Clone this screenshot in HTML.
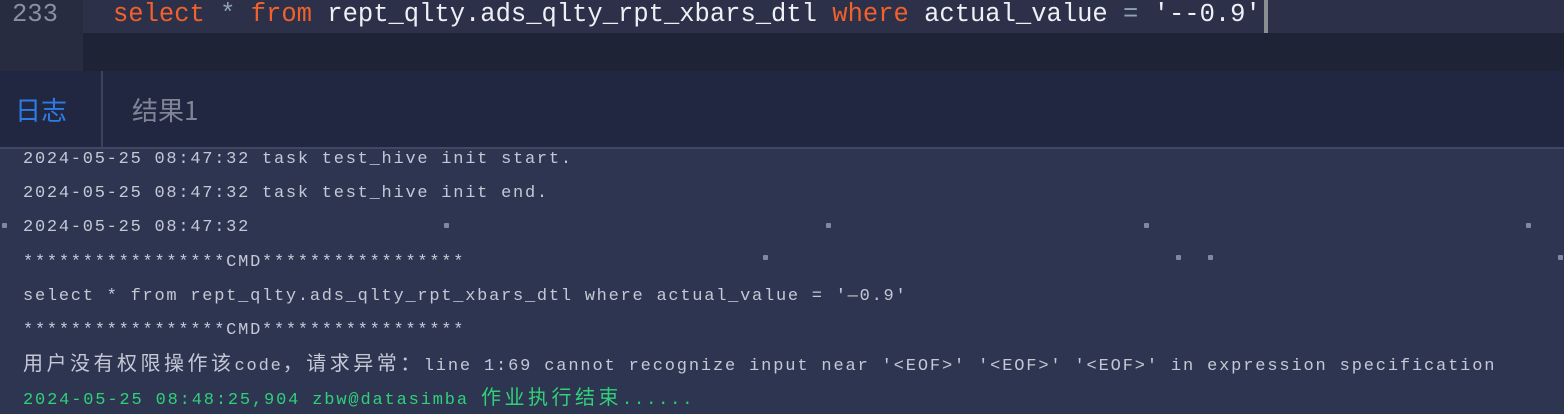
<!DOCTYPE html>
<html><head><meta charset="utf-8"><style>
html,body{margin:0;padding:0;width:1564px;height:414px;overflow:hidden;background:#2e3550;position:relative}
.abs{position:absolute}
.code{font-family:"Liberation Mono",monospace;font-size:25.5px;white-space:pre;color:#eef0f5;line-height:33px}
.kw{color:#f0612c}
.log{font-family:"Liberation Mono","Noto Sans CJK SC",monospace;font-size:17px;letter-spacing:1.75px;color:#c4c8d6;white-space:pre;left:23px;line-height:20px}
.l2{letter-spacing:1.85px}
.cj{font-family:"Noto Sans CJK SC",sans-serif;font-size:20px;letter-spacing:3.5px;line-height:20px}
.dot{position:absolute;width:5px;height:5px;background:#7d8aa3;border-radius:1px}
</style></head><body>
<div class="abs" style="left:0;top:0;width:1564px;height:33px;background:#2c3149"></div>
<div class="abs" style="left:0;top:0;width:83px;height:71px;background:#272c40"></div>
<div class="abs" style="left:83px;top:33px;width:1481px;height:38px;background:#1f2336"></div>
<div class="abs code" style="left:12px;top:-2px;color:#8a90a3">233</div>
<div class="abs code" style="left:113px;top:-2px"><span class="kw">select</span> <span style="color:#8fa0b8">*</span> <span class="kw">from</span> rept_qlty.ads_qlty_rpt_xbars_dtl <span class="kw">where</span> actual_value <span style="color:#8fa0b8">=</span> '--0.9'</div>
<div class="abs" style="left:1264px;top:0;width:4px;height:33px;background:#8a9090"></div>
<div class="abs" style="left:0;top:71px;width:1564px;height:76px;background:#222741"></div>
<div class="abs" style="left:101px;top:71px;width:2px;height:76px;background:#3a4260"></div>
<div class="abs" style="left:0;top:147px;width:1564px;height:2px;background:#404863"></div>
<div class="abs" style="left:15px;top:94px;font:26px 'Noto Sans CJK SC',sans-serif;color:#2f7be6;line-height:32px">日志</div>
<div class="abs" style="left:132px;top:94px;font:26px 'Noto Sans CJK SC',sans-serif;color:#7f8596;line-height:32px">结果1</div>
<div class="abs log" style="top:150px">2024-05-25 08:47:32 task test_hive init start.</div>
<div class="abs log" style="top:184px">2024-05-25 08:47:32 task test_hive init end.</div>
<div class="abs log" style="top:218px">2024-05-25 08:47:32</div>
<div class="abs log" style="top:253px">*****************CMD*****************</div>
<div class="abs log" style="top:287px">select * from rept_qlty.ads_qlty_rpt_xbars_dtl where actual_value = '—0.9'</div>
<div class="abs log" style="top:321px">*****************CMD*****************</div>
<div class="abs log l2" style="top:352px"><span class="cj">用户没有权限操作该</span>code<span class="cj">，请求异常：</span>line 1:69 cannot recognize input near '&lt;EOF&gt;' '&lt;EOF&gt;' '&lt;EOF&gt;' in expression specification</div>
<div class="abs log l2" style="top:386px;color:#2ed17a">2024-05-25 08:48:25,904 zbw@datasimba <span class="cj">作业执行结束</span>......</div>
<div class="dot" style="left:444px;top:223px"></div>
<div class="dot" style="left:826px;top:223px"></div>
<div class="dot" style="left:1144px;top:223px"></div>
<div class="dot" style="left:1526px;top:223px"></div>
<div class="dot" style="left:763px;top:255px"></div>
<div class="dot" style="left:1176px;top:255px"></div>
<div class="dot" style="left:1208px;top:255px"></div>
<div class="dot" style="left:1558px;top:255px"></div>
<div class="dot" style="left:2px;top:223px"></div>
</body></html>
